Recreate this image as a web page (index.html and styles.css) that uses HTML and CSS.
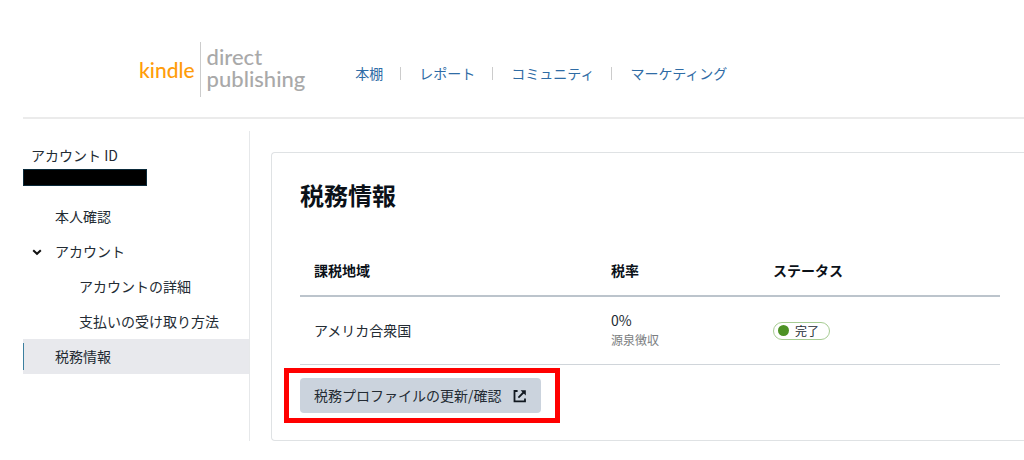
FILE: index.html
```
<!DOCTYPE html>
<html lang="ja">
<head>
    <meta charset="UTF-8">
    <meta name="viewport" content="width=device-width, initial-scale=1.0">
    <title>税務情報 - Kindle Direct Publishing</title>
    <link rel="stylesheet" href="styles.css">
</head>
<body>
    <header class="header">
        <a class="logo" href="#">
            <span class="logo-kindle">kindle</span>
            <span class="logo-kdp">direct<br>publishing</span>
        </a>
        <nav class="nav">
            <a href="#">本棚</a>
            <a href="#">レポート</a>
            <a href="#">コミュニティ</a>
            <a href="#">マーケティング</a>
        </nav>
    </header>

    <div class="layout">
        <aside class="sidebar">
            <p class="account-label">アカウント ID</p>
            <div class="account-id"></div>
            <nav class="menu">
                <a class="menu-item" href="#">本人確認</a>
                <button class="menu-item" type="button" aria-expanded="true">
                    <svg class="chevron" viewBox="0 0 10 10" aria-hidden="true">
                        <path d="M1.2 3.2 L5 6.8 L8.8 3.2" fill="none" stroke="currentColor" stroke-width="2"/>
                    </svg>
                    アカウント
                </button>
                <a class="menu-item sub" href="#">アカウントの詳細</a>
                <a class="menu-item sub" href="#">支払いの受け取り方法</a>
                <a class="menu-item active" href="#">税務情報</a>
            </nav>
        </aside>

        <main class="card">
            <h1>税務情報</h1>
            <table class="tax-table">
                <thead>
                    <tr>
                        <th class="col-region">課税地域</th>
                        <th class="col-rate">税率</th>
                        <th>ステータス</th>
                    </tr>
                </thead>
                <tbody>
                    <tr>
                        <td>アメリカ合衆国</td>
                        <td>0%<small>源泉徴収</small></td>
                        <td><span class="status">完了</span></td>
                    </tr>
                </tbody>
            </table>
            <div class="highlight">
                <button class="update-button" type="button">
                    税務プロファイルの更新/確認
                    <svg class="external" viewBox="0 0 14 14" aria-hidden="true">
                        <path d="M4.6 2 H1.5 V12.4 H12 V9.4" fill="none" stroke="currentColor" stroke-width="1.8"/>
                        <path d="M5.4 8.6 L11 3" fill="none" stroke="currentColor" stroke-width="1.8"/>
                        <path d="M7.6 1.2 H12.8 V6.4 Z" fill="currentColor"/>
                    </svg>
                </button>
            </div>
        </main>
    </div>
</body>
</html>
```
FILE: styles.css
```
* {
    box-sizing: border-box;
}

body {
    margin: 0;
    padding-left: 23px;
    background-color: #fff;
    color: #232b33;
    font-family: "Noto Sans CJK JP", sans-serif;
    font-size: 14px;
    line-height: 20px;
}

a {
    text-decoration: none;
}

button {
    border: none;
    background: none;
    color: inherit;
    font: inherit;
    cursor: pointer;
}

/* Header */
.header {
    display: flex;
    align-items: center;
    gap: 50px;
    padding: 42px 116px 20px;
    border-bottom: 2px solid #ebebeb;
}

.logo {
    display: flex;
    align-items: center;
    font-family: Lato, sans-serif;
    font-size: 22px;
    font-weight: 500;
    line-height: 22px;
}

.logo-kindle {
    padding-right: 5px;
    color: #ff9d0a;
    font-size: 21px;
}

.logo-kdp {
    padding: 4px 0 7px 6px;
    border-left: 1px solid #ccc;
    color: #a9a9a9;
}

.nav {
    display: flex;
    padding-top: 7px;
}

.nav a {
    display: flex;
    align-items: center;
    color: #2f6ca5;
}

.nav a + a::before {
    content: "";
    width: 1px;
    height: 13px;
    margin: 0 18px 0 17px;
    background-color: #ccc;
}

/* Sidebar */
.layout {
    display: flex;
    padding: 12px 0 19px;
}

.sidebar {
    flex: 0 0 227px;
    padding-top: 14px;
    border-right: 1px solid #e6e8ea;
}

.account-label {
    margin: 0 0 4px 8px;
}

.account-id {
    width: 124px;
    height: 17px;
    margin-bottom: 13px;
    border: 1px solid #0b2a3a;
    background-color: #000;
}

.menu-item {
    display: flex;
    align-items: center;
    position: relative;
    width: 100%;
    padding: 7px 0 7px 32px;
    color: inherit;
    line-height: 21px;
}

.menu-item.sub {
    padding-left: 56px;
}

.menu-item.active {
    background-color: #e8e9ed;
}

.menu-item.active::before {
    content: "";
    position: absolute;
    top: 4px;
    bottom: 4px;
    left: 0;
    width: 1px;
    background-color: #3b7f9f;
}

.chevron {
    width: 10px;
    height: 10px;
    margin: 0 13px 0 -23px;
    color: #111;
}

/* Tax card */
.card {
    flex: 1;
    margin: 21px 0 0 21px;
    padding: 27px 24px 27px 28px;
    border: 1px solid #dfe2e4;
    border-right: none;
    border-radius: 4px 0 0 4px;
}

h1 {
    margin: 0 0 36px;
    color: #0b1118;
    font-size: 24px;
    line-height: 30px;
}

.tax-table {
    width: 100%;
    border-collapse: collapse;
    table-layout: fixed;
}

.tax-table th,
.tax-table td {
    padding: 14px;
    text-align: left;
}

.tax-table th {
    padding-bottom: 15px;
    border-bottom: 2px solid #bcc4cc;
    color: #0b1118;
}

.tax-table td {
    padding-top: 13px;
    border-bottom: 1px solid #d0d5da;
}

.tax-table small {
    display: block;
    color: #7a7d80;
    font-size: 12px;
    line-height: 20px;
}

.col-region {
    width: 297px;
}

.col-rate {
    width: 162px;
}

.status {
    display: inline-flex;
    align-items: center;
    gap: 6px;
    padding: 0 10px 0 4px;
    border: 1px solid #a7cc93;
    border-radius: 9px;
    font-size: 12px;
    line-height: 16px;
}

.status::before {
    content: "";
    width: 11px;
    height: 11px;
    border-radius: 50%;
    background-color: #4d9224;
}

.highlight {
    position: relative;
    width: fit-content;
    margin-top: 13px;
}

/* Red frame round the button */
.highlight::after {
    content: "";
    position: absolute;
    inset: -10px -19px -10px -16px;
    border: 5px solid #f00;
    pointer-events: none;
}

.update-button {
    display: flex;
    align-items: center;
    gap: 11px;
    padding: 7px 14px;
    border-radius: 4px;
    background-color: #cbd3dd;
    line-height: 21px;
}

.external {
    width: 14px;
    height: 14px;
    color: #111820;
}
```
